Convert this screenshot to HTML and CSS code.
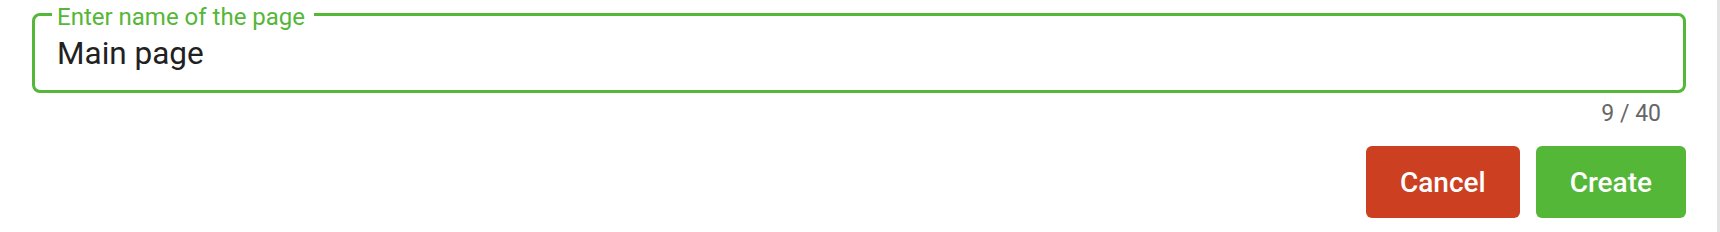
FILE: index.html
```html
<!DOCTYPE html>
<html lang="en">
<head>
<meta charset="utf-8">
<title>Create page</title>
<link rel="stylesheet" href="styles.css">
</head>
<body>
<div class="card">
  <div class="field">
    <span class="field-label">Enter name of the page</span>
    <div class="field-value">Main page</div>
  </div>
  <div class="counter">9 / 40</div>
  <div class="actions">
    <button class="btn btn-cancel" type="button">Cancel</button>
    <button class="btn btn-create" type="button">Create</button>
  </div>
</div>
</body>
</html>
```

FILE: styles.css
```css
* { box-sizing: border-box; }
html, body { margin: 0; padding: 0; background: #fff; }
body {
  font-family: Roboto, "Liberation Sans", Arial, sans-serif;
  width: 1720px;
  height: 232px;
  overflow: hidden;
}
.card {
  width: 1720px;
  height: 232px;
  padding: 13px 31px 0 32px;
  border-right: 3px solid #e3e3e3;
  background: #fff;
}
.field {
  position: relative;
  height: 80px;
  border: 3px solid #55b737;
  border-radius: 8px;
  padding: 0 22px;
  display: flex;
  align-items: center;
}
.field-label {
  position: absolute;
  left: 17px;
  top: -13px;
  padding: 0 9px 0 5px;
  background: #fff;
  color: #55b737;
  font-size: 24px;
  line-height: 28px;
}
.field-value {
  color: #212121;
  font-size: 31.5px;
  line-height: 34px;
  margin-top: 2px;
}
.counter {
  text-align: right;
  color: #666;
  font-size: 23px;
  line-height: 24px;
  margin-top: 9px;
  padding-right: 25px;
}
.actions {
  display: flex;
  justify-content: flex-end;
  gap: 16px;
  margin-top: 20px;
}
.btn {
  height: 72px;
  padding: 0 34px;
  border: none;
  border-radius: 6px;
  color: #fff;
  font-family: inherit;
  font-size: 28px;
  font-weight: 500;
  cursor: pointer;
}
.btn-cancel { background: #cc3f20; }
.btn-create { background: #55b737; }
```
